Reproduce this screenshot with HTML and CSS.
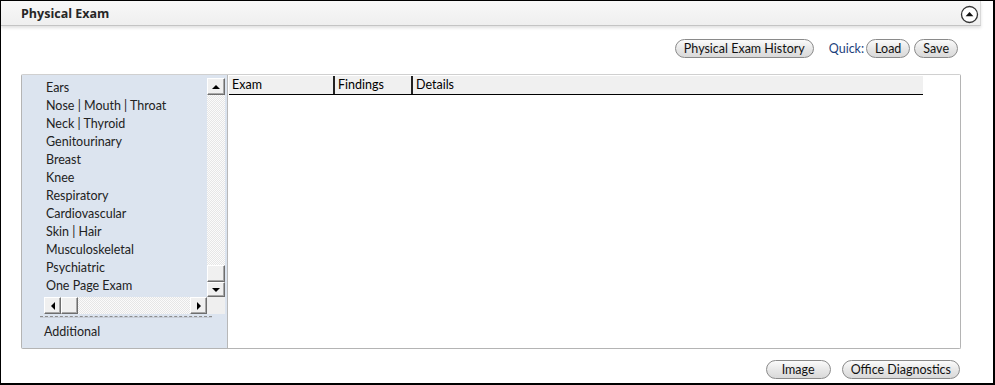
FILE: index.html
```html
<!DOCTYPE html>
<html lang="en">
  <head>
    <meta charset="UTF-8" />
    <title>Physical Exam</title>
    <link rel="stylesheet" href="styles.css">
  </head>
  <body>
    <div class="frame">
      <div class="header">
        <h3>Physical Exam</h3>
        <span class="collapse">
          <svg width="19" height="19" viewBox="0 0 19 19">
            <circle cx="9.5" cy="9.5" r="8" fill="#fff" stroke="#333" stroke-width="1.3" />
            <path d="M5.6 11.2 L9.5 6.9 L13.4 11.2 Z" fill="#111" />
          </svg>
        </span>
      </div>

      <div class="toolbar">
        <button class="pill">Physical Exam History</button>
        <span class="quick">Quick:</span>
        <button class="pill">Load</button>
        <button class="pill">Save</button>
      </div>

      <div class="panel">
        <div class="sidebar">
          <div class="listbox">
            <ul class="items">
              <li>Ears</li>
              <li>Nose | Mouth | Throat</li>
              <li>Neck | Thyroid</li>
              <li>Genitourinary</li>
              <li>Breast</li>
              <li>Knee</li>
              <li>Respiratory</li>
              <li>Cardiovascular</li>
              <li>Skin | Hair</li>
              <li>Musculoskeletal</li>
              <li>Psychiatric</li>
              <li>One Page Exam</li>
            </ul>
            <div class="vscroll">
              <span class="sb-btn"><i class="arr up"></i></span>
              <span class="track"></span>
              <span class="sb-btn thumb"></span>
              <span class="sb-btn"><i class="arr down"></i></span>
            </div>
            <div class="hscroll">
              <span class="sb-btn"><i class="arr left"></i></span>
              <span class="sb-btn thumb"></span>
              <span class="track"></span>
              <span class="sb-btn"><i class="arr right"></i></span>
            </div>
            <div class="corner"></div>
          </div>
          <div class="dashes"></div>
          <div class="additional">Additional</div>
        </div>

        <div class="content">
          <div class="grid-head">
            <span class="col col-exam">Exam</span>
            <span class="col col-findings">Findings</span>
            <span class="col col-details">Details</span>
          </div>
        </div>
      </div>

      <div class="footer">
        <button class="pill wide">Image</button>
        <button class="pill">Office Diagnostics</button>
      </div>
    </div>
  </body>
</html>
```

FILE: styles.css
```css
body {
  margin: 0;
  padding: 0;
  background-color: #ffffff;
  font-family: Lato, "Open Sans", sans-serif;
  font-size: 12.5px;
  color: #222;
}

.frame {
  width: 995px;
  height: 385px;
  box-sizing: border-box;
  border: 1px solid #000;
  border-right-width: 2px;
  border-bottom-width: 2px;
  overflow: hidden;
}

.header {
  height: 24px;
  margin-right: 12px;
  padding: 0 1px 0 20px;
  display: flex;
  align-items: center;
  justify-content: space-between;
  background: linear-gradient(#f8f8f8, #efefef);
  border-bottom: 1px solid #c4c4c4;
  border-right: 1px solid #d8d8d8;
  box-shadow: 0 2px 3px rgba(0, 0, 0, 0.12);
}

.header h3 {
  margin: 0;
  font-family: "Open Sans", sans-serif;
  font-size: 12.5px;
  font-weight: bold;
  color: #262626;
}

.collapse {
  display: flex;
  margin-top: 2px;
}

.toolbar {
  display: flex;
  justify-content: flex-end;
  align-items: center;
  gap: 4px;
  margin: 13px 35px 0 0;
}

.quick {
  color: #1c3f7c;
  margin: 0 -2px 0 11px;
}

.pill {
  height: 19px;
  padding: 0 8px;
  border: 1px solid #8a8a8a;
  border-radius: 10px;
  background: linear-gradient(#fbfbfb, #e6e6e6 55%, #d9d9d9);
  font-family: inherit;
  font-size: 12.5px;
  color: #111;
  line-height: 16px;
  cursor: pointer;
}

.pill.wide {
  min-width: 65px;
}

.panel {
  display: flex;
  width: 940px;
  height: 275px;
  box-sizing: border-box;
  margin: 16px 0 0 20px;
  border: 1px solid #b4b4b4;
  border-top-color: #d0d0d0;
  border-radius: 2px;
}

.sidebar {
  width: 205px;
  flex: none;
  background-color: #dce4ef;
  border-right: 1px solid #b8b8b8;
  padding-top: 3px;
}

.listbox {
  display: grid;
  grid-template-columns: 185px 18px;
  grid-template-rows: 219px 17px;
}

.items {
  list-style: none;
  margin: 0;
  padding: 1px 0 0 24px;
  overflow: hidden;
}

.items li {
  height: 18px;
  line-height: 18px;
  color: #222;
  white-space: nowrap;
}

.vscroll {
  display: flex;
  flex-direction: column;
}

.hscroll {
  display: flex;
  margin-left: 22px;
}

.track {
  flex: 1;
  background-color: #f7f7f7;
  background-image: repeating-conic-gradient(#e6e6e6 0 25%, #fbfbfb 0 50%);
  background-size: 2px 2px;
}

.corner {
  background-color: #efefef;
}

.sb-btn {
  width: 17px;
  height: 17px;
  flex: none;
  box-sizing: border-box;
  display: flex;
  align-items: center;
  justify-content: center;
  background-color: #f0f0f0;
  border: 1px solid;
  border-color: #ffffff #6e6e6e #6e6e6e #ffffff;
  box-shadow: inset -1px -1px 0 #a8a8a8;
}

.vscroll .sb-btn {
  width: 18px;
}

.vscroll .sb-btn:last-child {
  height: 15px;
}

.arr {
  width: 0;
  height: 0;
  border: 4px solid transparent;
}

.arr.up {
  border-bottom-color: #000;
  border-top-width: 0;
}

.arr.down {
  border-top-color: #000;
  border-bottom-width: 0;
}

.arr.left {
  border-right-color: #000;
  border-left-width: 0;
}

.arr.right {
  border-left-color: #000;
  border-right-width: 0;
}

.dashes {
  margin: 2px 15px 0 18px;
  border-top: 1px dashed #8d8d8d;
  border-bottom: 1px solid #c8ced8;
  height: 0;
}

.additional {
  margin: 5px 0 0 22px;
  color: #222;
  line-height: 18px;
}

.content {
  flex: 1;
  padding: 1px 0 0 1px;
  background-color: #fff;
}

.grid-head {
  display: flex;
  width: 694px;
  height: 18px;
  background-color: #f0f0f0;
  border-bottom: 1px solid #000;
}

.col {
  box-sizing: border-box;
  padding-left: 3px;
  line-height: 17px;
  color: #000;
  border-right: 2px solid #222;
}

.col-exam {
  width: 106px;
}

.col-findings {
  width: 78px;
}

.col-details {
  flex: 1;
  border-right: none;
}

.footer {
  display: flex;
  justify-content: flex-end;
  gap: 11px;
  margin: 11px 33px 0 0;
}
```
